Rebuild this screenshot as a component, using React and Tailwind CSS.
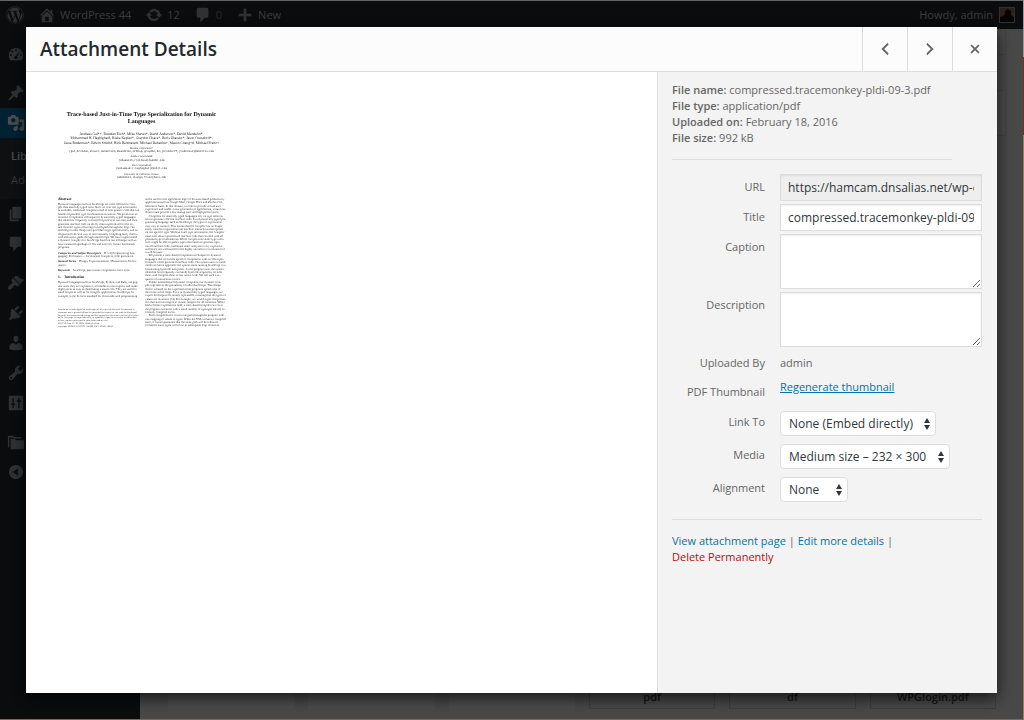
import React from "react";
import { FaWordpress } from "react-icons/fa6";

// 20x20 admin icon outlines
const ICONS = {
  dashboard:
    "M3.8 17h12.4c1.1-1.4 1.8-3.2 1.8-5.2C18 7 14.400 3.200 10 3.200S2 7 2 11.800c0 2 .7 3.800 1.800 5.200zM10 4.600a1.100 1.100 0 1 1 0 2.200 1.100 1.100 0 0 1 0-2.200zM6 6.200a1.100 1.100 0 1 1 0 2.200 1.100 1.100 0 0 1 0-2.200zM14.300 6.500l-2.700 6.400a1.900 1.900 0 1 1-1.700-1zM4.400 10.100a1.100 1.100 0 1 1 0 2.200 1.100 1.100 0 0 1 0-2.200zM15.600 10.100a1.100 1.100 0 1 1 0 2.200 1.100 1.100 0 0 1 0-2.200z",
  home: "M16 8.5l1.53 1.53-1.06 1.06L10 4.6l-6.470 6.490-1.060-1.060L10 2.500l4 4v-2h2v4zm-6-2.460l6 5.990V18H4v-5.970zM12 17v-5H8v5h4z",
  update:
    "M10.2 3.280c3.530 0 6.430 2.610 6.920 6h2.080l-3.500 4-3.500-4h2.320c-.45-1.970-2.210-3.450-4.320-3.450-1.450 0-2.730.71-3.540 1.780L4.950 5.660C6.230 4.200 8.110 3.280 10.200 3.280zm-.4 13.440c-3.520 0-6.430-2.610-6.920-6H.8l3.500-4c1.170 1.330 2.330 2.670 3.500 4H5.480c.45 1.970 2.210 3.450 4.320 3.450 1.450 0 2.730-.71 3.540-1.780l1.710 1.950c-1.280 1.460-3.150 2.380-5.250 2.380z",
  comments: "M5 2h9c1.1 0 2 .9 2 2v7c0 1.100-.9 2-2 2h-2l-5 5v-5H5c-1.100 0-2-.9-2-2V4c0-1.100.9-2 2-2z",
  plus: "M17 8.500v3h-5.500V17h-3v-5.500H3v-3h5.500V3h3v5.500z",
  post: "M10.440 3.020l1.820-1.820 6.360 6.350-1.830 1.820c-1.050-.68-2.480-.57-3.410.36l-.75.75c-.92.93-1.040 2.350-.35 3.410l-1.830 1.820-2.410-2.410-2.800 2.790c-.42.42-3.380 2.710-3.800 2.290s1.860-3.390 2.280-3.810l2.790-2.790L4.100 9.360l1.830-1.820c1.050.69 2.480.57 3.400-.36l.75-.75c.93-.92 1.050-2.350.36-3.410z",
  media:
    "M13 11V4c0-.55-.45-1-1-1h-1.670L9 1H5L3.670 3H2c-.55 0-1 .45-1 1v7c0 .55.45 1 1 1h10c.55 0 1-.45 1-1zM7 4.500c1.380 0 2.500 1.120 2.500 2.500S8.380 9.500 7 9.500 4.500 8.380 4.500 7 5.620 4.500 7 4.500zM14 6h5v10.500c0 1.380-1.120 2.500-2.500 2.500S14 17.880 14 16.500s1.120-2.500 2.500-2.500c.17 0 .34.02.5.05V9h-3V6zm-4 8.050V13h2v3.500c0 1.380-1.120 2.500-2.500 2.500S7 17.880 7 16.500 8.120 14 9.500 14c.17 0 .34.02.5.05z",
  page: "M6 15V2h10v13H6zm-1 1h8v2H3V5h2v11z",
  appearance:
    "M14.480 11.060L7.410 3.990l1.500-1.500c.5-.56 2.300-.47 3.510.32 1.210.8 1.430 1.280 2.910 2.100 1.180.64 2.450 1.260 4.450.85zm-.71.71L6.700 4.700 4.930 6.470c-.39.39-.39 1.020 0 1.410l1.060 1.060c.39.39.39 1.030 0 1.420-.6.6-1.430 1.110-2.210 1.690-.35.26-.7.53-1.010.84C1.430 14.230.4 16.080 1.400 17.070c.99 1 2.840-.03 4.180-1.360.31-.31.58-.66.85-1.020.57-.78 1.080-1.610 1.690-2.210.39-.39 1.020-.39 1.410 0l1.060 1.060c.39.39 1.020.39 1.410 0z",
  plugins:
    "M13.110 4.360L9.870 7.600 8 5.730l3.240-3.240c.35-.34 1.050-.2 1.560.32.52.51.66 1.210.31 1.550zm-8 1.770l.91-1.120 9.010 9.010-1.190.84c-.71.71-2.630 1.160-3.820 1.160H6.140L4.900 17.260c-.59.59-1.540.59-2.120 0-.59-.58-.59-1.530 0-2.120l1.240-1.240v-3.880c0-1.130.4-3.190 1.090-3.890zm7.260 3.970l3.240-3.240c.34-.35 1.040-.21 1.550.31.52.51.66 1.210.31 1.550l-3.240 3.250z",
  users:
    "M10 9.250c-2.270 0-2.730-3.440-2.730-3.440C7 4.020 7.820 2 9.970 2c2.160 0 2.980 2.020 2.710 3.810 0 0-.41 3.440-2.680 3.440zm0 2.570L12.720 10c2.390 0 4.520 2.330 4.520 4.530v2.490s-3.650 1.130-7.240 1.130c-3.650 0-7.240-1.130-7.240-1.130v-2.490c0-2.250 1.940-4.480 4.470-4.480z",
  tools:
    "M16.680 9.770c-1.340 1.340-3.300 1.670-4.950.99l-5.410 6.520c-.99.99-2.590.99-3.580 0s-.99-2.590 0-3.570l6.520-5.420c-.68-1.650-.35-3.610.99-4.950 1.280-1.280 3.120-1.620 4.720-1.060l-2.890 2.890 2.820 2.820 2.860-2.870c.53 1.580.18 3.390-1.080 4.650zM3.810 16.210c.4.39 1.040.39 1.430 0 .4-.4.4-1.040 0-1.430-.39-.4-1.030-.4-1.430 0-.39.39-.39 1.030 0 1.430z",
  settings:
    "M3 2h14c.6 0 1 .4 1 1v14c0 .6-.4 1-1 1H3c-.6 0-1-.4-1-1V3c0-.6.4-1 1-1zM6 4.500v6H4.500v1.800H6v3.200h1.500v-3.200H9v-1.800H7.500v-6zM12.500 4.500V7H11v1.800h1.500v6.700H14V8.800h1.500V7H14V4.500z",
  folder: "M1 3h6l1.500 1.500H16V6H8L6.800 5H2.500v11H1zM4 6.500h4.500L10 8h9v10H4z",
  collapse:
    "M10 2.160c4.330 0 7.840 3.510 7.840 7.840s-3.510 7.840-7.840 7.840S2.160 14.330 2.160 10 5.710 2.160 10 2.160zm2 11.720V6.120L6.180 9.970z",
  left: "M14 5l-5 5 5 5-1 2-7-7 7-7z",
  right: "M6 15l5-5-5-5 1-2 7 7-7 7z",
  close:
    "M14.950 6.460L11.410 10l3.540 3.540-1.410 1.410L10 11.420l-3.530 3.530-1.420-1.420L8.580 10 5.050 6.470l1.420-1.420L10 8.580l3.540-3.530z",
};

const Icon = ({ name, className = "size-[18px]" }) => (
  <svg viewBox="0 0 20 20" fill="currentColor" fillRule="evenodd" aria-hidden="true" className={className}>
    <path d={ICONS[name]} />
  </svg>
);

const authors = [
  "Andreas Gal*+, Brendan Eich*, Mike Shaver*, David Anderson*, David Mandelin*,",
  "Mohammad R. Haghighat$, Blake Kaplan*, Graydon Hoare*, Boris Zbarsky*, Jason Orendorff*,",
  "Jesse Ruderman*, Edwin Smith#, Rick Reitmaier#, Michael Bebenita+, Mason Chang+#, Michael Franz+",
];

const affiliations = [
  ["Mozilla Corporation*", "{gal,brendan,shaver,danderson,dmandelin,mrbkap,graydon,bz,jorendorff,jruderman}@mozilla.com"],
  ["Adobe Corporation#", "{edwsmith,rreitmai}@adobe.com"],
  ["Intel Corporation$", "{mohammad.r.haghighat}@intel.com"],
  ["University of California, Irvine+", "{mbebenit,changm,franz}@uci.edu"],
];

const abstractLines = [
  "Dynamic languages such as JavaScript are more difficult to com-",
  "pile than statically typed ones. Since no concrete type information",
  "is available, traditional compilers need to emit generic code that can",
  "handle all possible type combinations at runtime. We present an al-",
  "ternative compilation technique for dynamically-typed languages",
  "that identifies frequently executed loop traces at run-time and then",
  "generates machine code on the fly that is specialized for the ac-",
  "tual dynamic types occurring on each path through the loop. Our",
  "method provides cheap inter-procedural type specialization, and an",
  "elegant and efficient way of incrementally compiling lazily discov-",
  "ered alternative paths through nested loops. We have implemented",
  "a dynamic compiler for JavaScript based on our technique and we",
  "have measured speedups of 10x and more for certain benchmark",
  "programs.",
];

const introLines = [
  "Dynamic languages such as JavaScript, Python, and Ruby, are pop-",
  "ular since they are expressive, accessible to non-experts, and make",
  "deployment as easy as distributing a source file. They are used for",
  "small scripts as well as for complex applications. JavaScript, for",
  "example, is the de facto standard for client-side web programming",
];

const permissionLines = [
  "Permission to make digital or hard copies of all or part of this work for personal or",
  "classroom use is granted without fee provided that copies are not made or distributed",
  "for profit or commercial advantage and that copies bear this notice and the full citation",
  "on the first page. To copy otherwise, to republish, to post on servers or to redistribute",
  "to lists, requires prior specific permission and/or a fee.",
];

const rightParagraphs = [
  [
    "and is used for the application logic of browser-based productivity",
    "applications such as Google Mail, Google Docs and Zimbra Col-",
    "laboration Suite. In this domain, in order to provide a fluid user",
    "experience and enable a new generation of applications, virtual ma-",
    "chines must provide a low startup time and high performance.",
  ],
  [
    "Compilers for statically typed languages rely on type informa-",
    "tion to generate efficient machine code. In a dynamically typed pro-",
    "gramming language such as JavaScript, the types of expressions",
    "may vary at runtime. This means that the compiler can no longer",
    "easily transform operations into machine instructions that operate",
    "on one specific type. Without exact type information, the compiler",
    "must emit slower generalized machine code that can deal with all",
    "potential type combinations. While compile-time static type infer-",
    "ence might be able to gather type information to generate opti-",
    "mized machine code, traditional static analysis is very expensive",
    "and hence not well suited for the highly interactive environment of",
    "a web browser.",
  ],
  [
    "We present a trace-based compilation technique for dynamic",
    "languages that reconciles speed of compilation with excellent per-",
    "formance of the generated machine code. Our system uses a mixed-",
    "mode execution approach: the system starts running JavaScript in a",
    "fast-starting bytecode interpreter. As the program runs, the system",
    "identifies hot (frequently executed) bytecode sequences, records",
    "them, and compiles them to fast native code. We call such a se-",
    "quence of instructions a trace.",
  ],
  [
    "Unlike method-based dynamic compilers, our dynamic com-",
    "piler operates at the granularity of individual loops. This design",
    "choice is based on the expectation that programs spend most of",
    "their time in hot loops. Even in dynamically typed languages, we",
    "expect hot loops to be mostly type-stable, meaning that the types of",
    "values are invariant. (12) For example, we would expect loop coun-",
    "ters that start as integers to remain integers for all iterations. When",
    "both of these expectations hold, a trace-based compiler can cover",
    "the program execution with a small number of type-specialized, ef-",
    "ficiently compiled traces.",
  ],
  [
    "Each compiled trace covers one path through the program with",
    "one mapping of values to types. When the VM executes a compiled",
    "trace, it cannot guarantee that the same path will be followed",
    "or that the same types will occur in subsequent loop iterations.",
  ],
];

// First line of a paragraph is indented, except for the very first one
const rightLines = rightParagraphs.flatMap((lines, p) =>
  lines.map((text, i) => ({ text, indent: p > 0 && i === 0 }))
);

const Lines = ({ lines, x, y, size, leading }) =>
  lines.map((line, i) => (
    <text key={i} x={x} y={y + i * leading} fontSize={size}>
      {line}
    </text>
  ));

// US Letter page, drawn in points
const PdfPage = () => (
  <svg
    viewBox="0 0 612 792"
    fill="#1c1c1c"
    fontFamily="Liberation Serif, serif"
    role="img"
    aria-label="PDF preview"
    className="w-[203px] [text-rendering:geometricPrecision]"
  >
    <g textAnchor="middle">
      <g fontSize="18" fontWeight="bold" fill="#111">
        <text x="306" y="91">Trace-based Just-in-Time Type Specialization for Dynamic</text>
        <text x="306" y="111">Languages</text>
      </g>
      {authors.map((line, i) => (
        <text key={line} x="306" y={148 + i * 13} fontSize="11">{line}</text>
      ))}
      {affiliations.map(([org, mail], i) => (
        <g key={org}>
          <text x="306" y={189 + i * 26} fontSize="8">{org}</text>
          <text x="306" y={199 + i * 26} fontSize="8" fontFamily="Liberation Mono, monospace">{mail}</text>
        </g>
      ))}
    </g>

    <text x="54" y="344" fontSize="11" fontWeight="bold" fill="#111">Abstract</text>
    <Lines lines={abstractLines} x={54} y={358} size={9} leading={10} />
    <text x="54" y="506" fontSize="9">
      <tspan fontWeight="bold" fontStyle="italic">Categories and Subject Descriptors</tspan>
      <tspan dx="9">D.3.4 [Programming Lan-</tspan>
    </text>
    <text x="54" y="516" fontSize="9">guages]: Processors — Incremental compilers, code generation.</text>
    <text x="54" y="532" fontSize="9">
      <tspan fontWeight="bold" fontStyle="italic">General Terms</tspan>
      <tspan dx="9">Design, Experimentation, Measurement, Perfor-</tspan>
    </text>
    <text x="54" y="542" fontSize="9">mance.</text>
    <text x="54" y="557" fontSize="9">
      <tspan fontWeight="bold" fontStyle="italic">Keywords</tspan>
      <tspan dx="9">JavaScript, just-in-time compilation, trace trees.</tspan>
    </text>
    <g fontSize="11" fontWeight="bold" fill="#111">
      <text x="54" y="580">1.</text>
      <text x="74" y="580">Introduction</text>
    </g>
    <Lines lines={introLines} x={54} y={595} size={9} leading={10} />
    <Lines lines={permissionLines} x={54} y={676} size={7} leading={8} />
    <text x="54" y="718" fontSize="7">PLDI’09, June 15–20, 2009, Dublin, Ireland.</text>
    <text x="54" y="726" fontSize="7">Copyright © 2009 ACM 978-1-60558-392-1/09/06…$5.00</text>

    {rightLines.map(({ text, indent }, i) => (
      <text key={i} x={indent ? 328 : 317} y={344 + i * 10} fontSize="9">{text}</text>
    ))}
  </svg>
);

const MenuItem = ({ icon, label }) => (
  <a href="#" aria-label={label} className="flex h-[30px] items-center pl-[7px] text-[#a0a5aa]">
    <Icon name={icon} />
  </a>
);

const AdminBar = () => (
  <header className="flex h-7 items-center justify-between bg-[#23282d] pr-2 pl-1.5 text-[11px] text-[#c0c2c4]">
    <div className="flex items-center gap-3.5">
      <FaWordpress className="size-[18px] text-[#a0a5aa]" />
      <a href="#" className="flex items-center gap-1">
        <Icon name="home" className="size-[18px] text-[#a0a5aa]" />
        WordPress 44
      </a>
      <a href="#" className="flex items-center gap-1">
        <Icon name="update" className="size-[18px] text-[#a0a5aa]" />
        12
      </a>
      <a href="#" className="flex items-center gap-1 text-[#82878c]">
        <Icon name="comments" className="size-[18px] text-[#a0a5aa]" />
        0
      </a>
      <a href="#" className="flex items-center gap-1">
        <Icon name="plus" className="size-[18px] text-[#a0a5aa]" />
        New
      </a>
    </div>
    <a href="#" className="flex items-center gap-1.5">
      Howdy, admin
      <svg viewBox="0 0 16 16" className="size-4" aria-hidden="true">
        <rect width="16" height="16" fill="#a0a5aa" />
        <rect x="1" y="1" width="14" height="14" fill="#94704e" />
        <path d="M1 15V10l3-1 2-2V4l3-2 3 2v4l3 2v5z" fill="#1a0d08" />
      </svg>
    </a>
  </header>
);

const AdminMenu = () => (
  <nav className="w-[140px] shrink-0 bg-[#23282d] pt-2.5 text-[11px]">
    <MenuItem icon="dashboard" label="Dashboard" />
    <div className="h-[9px]" />
    <MenuItem icon="post" label="Posts" />
    <div className="bg-[#0073aa]">
      <a href="#" aria-label="Media" className="flex h-[30px] items-center pl-[7px] text-white">
        <Icon name="media" />
      </a>
    </div>
    <div className="flex h-[61px] flex-col gap-2 bg-[#32373c] pt-2.5 pl-[11px] leading-4 text-[#b4b9be]">
      <a href="#" className="font-semibold text-white">Library</a>
      <a href="#">Add New</a>
    </div>
    <MenuItem icon="page" label="Pages" />
    <MenuItem icon="comments" label="Comments" />
    <div className="h-[9px]" />
    <MenuItem icon="appearance" label="Appearance" />
    <MenuItem icon="plugins" label="Plugins" />
    <MenuItem icon="users" label="Users" />
    <MenuItem icon="tools" label="Tools" />
    <MenuItem icon="settings" label="Settings" />
    <div className="h-[9px]" />
    <MenuItem icon="folder" label="Folders" />
    <MenuItem icon="collapse" label="Collapse menu" />
  </nav>
);

const mediaItems = ["", "", "", "pdf", "df", "WPGlogin.pdf"];

const MediaLibrary = () => (
  <main className="flex grow flex-col bg-[#f1f1f1]">
    <div className="mr-[17px] h-[26px] border-r border-b border-[#ddd] bg-[#f5f5f5]" />
    <div className="mt-[35px] mr-[17px] h-[46px] border border-[#ddd] bg-[#fbfbfb]" />
    <div className="mt-auto mb-[10px] grid grid-cols-6 gap-3.5 pr-[27px] pl-7">
      {mediaItems.map((name, i) => (
        <div
          key={i}
          className={
            name
              ? "flex h-[126px] items-end justify-center border border-[#ccc] bg-[#eee] pb-[3px] text-[11px] font-semibold text-[#444]"
              : "h-[126px] bg-white"
          }
        >
          {name}
        </div>
      ))}
    </div>
  </main>
);

const Field = ({ label, id, children, className = "" }) => (
  <div className={`flex ${className}`}>
    <label htmlFor={id} className="mr-[15px] w-[93px] shrink-0 pt-[5px] text-right leading-4">
      {label}
    </label>
    {children}
  </div>
);

const Select = ({ id, value, className }) => (
  <div className={`grid h-[25px] items-center ${className}`}>
    <select
      id={id}
      className="col-start-1 row-start-1 h-full w-full appearance-none rounded border border-[#ddd] bg-white pl-2 text-xs text-[#32373c]"
    >
      <option>{value}</option>
    </select>
    <svg
      viewBox="0 0 6 12"
      fill="#32373c"
      aria-hidden="true"
      className="pointer-events-none col-start-1 row-start-1 mr-1.5 h-3 w-1.5 justify-self-end"
    >
      <path d="M3 0l3 5H0zM3 12L0 7h6z" />
    </svg>
  </div>
);

const inputClass =
  "min-w-0 grow border border-[#ddd] px-[7px] text-xs text-[#32373c] shadow-[inset_0_1px_2px_rgba(0,0,0,0.07)]";

const DetailsPanel = () => (
  <aside className="w-[340px] shrink-0 border-l border-[#ddd] bg-[#f3f3f3] pt-2.5 pr-[15px] pl-3.5 text-[11px] text-[#666]">
    <div className="leading-4">
      <div><strong className="font-semibold">File name:</strong> compressed.tracemonkey-pldi-09-3.pdf</div>
      <div><strong className="font-semibold">File type:</strong> application/pdf</div>
      <div><strong className="font-semibold">Uploaded on:</strong> February 18, 2016</div>
      <div><strong className="font-semibold">File size:</strong> 992 kB</div>
    </div>
    <hr className="mt-[13px] mr-[30px] border-[#ddd]" />

    <div className="mt-[14px] flex flex-col gap-[3px]">
      <Field label="URL" id="url">
        <input
          id="url"
          readOnly
          value="https://hamcam.dnsalias.net/wp-content/uploads/compressed.tracemonkey-pldi-09-3.pdf"
          className={`${inputClass} h-[27px] bg-[#eee]`}
        />
      </Field>
      <Field label="Title" id="title">
        <input id="title" defaultValue="compressed.tracemonkey-pldi-09-3" className={`${inputClass} h-[27px] bg-white`} />
      </Field>
      <Field label="Caption" id="caption">
        <textarea id="caption" className={`${inputClass} h-[55px] bg-white`} />
      </Field>
      <Field label="Description" id="description">
        <textarea id="description" className={`${inputClass} h-[55px] bg-white`} />
      </Field>
      <Field label="Uploaded By" className="h-[26px]">
        <span className="pt-[5px] leading-4">admin</span>
      </Field>
      <Field label="PDF Thumbnail" className="h-[27px]">
        <a href="#" className="leading-4 text-[#0073aa] underline">Regenerate thumbnail</a>
      </Field>
      <Field label="Link To" id="link-to" className="h-[30px]">
        <Select id="link-to" value="None (Embed directly)" className="mt-0.5 w-[156px]" />
      </Field>
      <Field label="Media" id="media" className="h-[30px]">
        <Select id="media" value="Medium size – 232 × 300" className="mt-0.5 w-[170px]" />
      </Field>
      <Field label="Alignment" id="alignment" className="h-[30px]">
        <Select id="alignment" value="None" className="mt-0.5 w-[68px]" />
      </Field>
    </div>

    <hr className="mt-[14px] border-[#ddd]" />
    <div className="mt-[13px] leading-4">
      <a href="#" className="text-[#0073aa]">View attachment page</a> |{" "}
      <a href="#" className="text-[#0073aa]">Edit more details</a> |
      <br />
      <a href="#" className="text-[#bc0b0b]">Delete Permanently</a>
    </div>
  </aside>
);

const headerButton = "flex w-[45px] items-center justify-center border-l border-[#ddd] text-[#666]";

const AttachmentModal = () => (
  <div role="dialog" aria-label="Attachment Details" className="flex grow flex-col bg-white shadow-[0_5px_15px_rgba(0,0,0,0.7)]">
    <div className="flex h-[45px] shrink-0 border-b border-[#ddd] bg-[#fcfcfc]">
      <h1 className="grow self-center pl-3.5 text-[19px] font-semibold text-[#23282d]">Attachment Details</h1>
      <button aria-label="Previous" className={headerButton}><Icon name="left" /></button>
      <button aria-label="Next" className={headerButton}><Icon name="right" /></button>
      <button aria-label="Close" className={headerButton}><Icon name="close" /></button>
    </div>
    <div className="flex grow">
      <div className="grow px-3.5 pt-3.5">
        <PdfPage />
      </div>
      <DetailsPanel />
    </div>
  </div>
);

const App = () => {
  return (
    <div className="flex min-h-screen font-['Open_Sans',sans-serif]">
      <div className="flex grow flex-col border-t border-b border-t-[#666] border-b-[#7a6c4c]">
        <AdminBar />
        <div className="flex grow">
          <AdminMenu />
          <MediaLibrary />
        </div>
      </div>
      {/* sliver of the desktop next to the window */}
      <div className="flex w-px flex-col bg-[#8c8460]">
        <div className="h-[57px] bg-[#999]" />
        <div className="h-[78px] bg-[#7a3020]" />
      </div>

      <div className="fixed inset-y-px right-px left-0 flex bg-black/70 p-[26px]">
        <AttachmentModal />
      </div>
    </div>
  );
};

export default App;
